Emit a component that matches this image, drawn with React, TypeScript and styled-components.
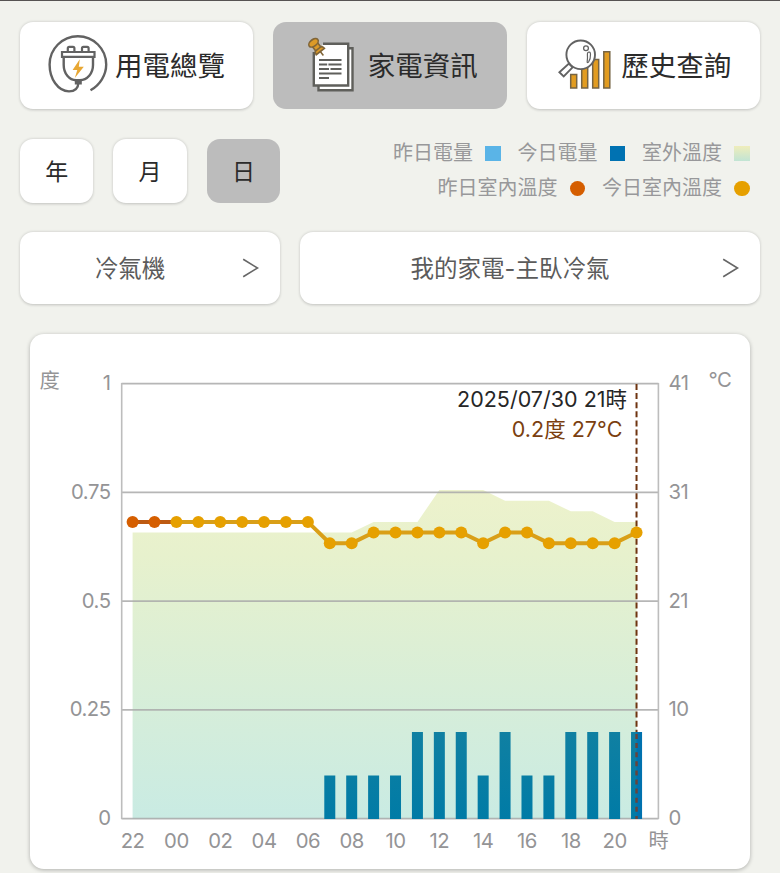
import React from "react";
import styled, { createGlobalStyle } from "styled-components";

const GlobalStyle = createGlobalStyle`
  * { box-sizing: border-box; }
  body {
    margin: 0;
    background: #f1f2ed;
    font-family: Inter, "Noto Sans CJK TC", sans-serif;
  }
  button { font-family: inherit; }
`;

const Page = styled.main`
  width: 780px;
  height: 873px;
  overflow: hidden;
  border-top: 1px solid #565352;
  padding: 20.5px 20px 0;
  display: flex;
  flex-direction: column;
`;

const Surface = styled.button<{ $active?: boolean }>`
  border: 0;
  padding: 0;
  border-radius: 13px;
  background: ${(p) => (p.$active ? "#bcbcbc" : "#fff")};
  box-shadow: ${(p) => (p.$active ? "none" : "0 0.5px 3px rgba(0, 0, 0, 0.2)")};
  color: #2b2b2b;
  display: flex;
  align-items: center;
  white-space: nowrap;
`;

const Tabs = styled.nav`
  display: grid;
  grid-template-columns: repeat(3, 1fr);
  gap: 20px;
  height: 87px;
`;

const Tab = styled(Surface)<{ $inset: number }>`
  padding-left: ${(p) => p.$inset}px;
  gap: 5px;
  font-size: 27.5px;
  line-height: 40px;

  svg { flex: none; }
  span { padding-top: 2px; }
`;

const FilterRow = styled.div`
  display: flex;
  justify-content: space-between;
  height: 63.5px;
  margin-top: 30.5px;
`;

const Periods = styled.div`
  display: flex;
  gap: 20px;
`;

const Period = styled(Surface)`
  width: 73.4px;
  justify-content: center;
  font-size: 23px;
  padding-bottom: 2px;
`;

const Legend = styled.div`
  display: flex;
  flex-direction: column;
  align-items: flex-end;
  gap: 6px;
  padding-right: 10.5px;
`;

const LegendLine = styled.div`
  display: flex;
  gap: 17px;
  height: 29.5px;
`;

const LegendItem = styled.div`
  display: flex;
  align-items: center;
  gap: 12px;
  color: #98989a;
  font-size: 20px;
  line-height: 29px;
`;

const Swatch = styled.i<{ $fill: string; $round?: boolean }>`
  width: 15.5px;
  height: 15.5px;
  background: ${(p) => p.$fill};
  border-radius: ${(p) => (p.$round ? "50%" : "0")};
`;

const Selectors = styled.div`
  display: grid;
  grid-template-columns: 260px 460px;
  gap: 20px;
  height: 72px;
  margin-top: 29.5px;
`;

const Selector = styled(Surface)`
  color: #5b5b5b;
  font-size: 23.5px;
  padding: 0 20px 0 0;

  span { flex: 1; text-align: center; padding-bottom: 2px; }
  svg { flex: none; }
`;

const ChartCard = styled.section`
  width: 720px;
  height: 534.5px;
  margin: 30px auto 0;
  flex: none;
  border-radius: 14px;
  background: #fff;
  box-shadow: 0 1px 4px rgba(0, 0, 0, 0.28);

  svg { display: block; }
`;

const AxisText = styled.text`
  fill: #949496;
  font-size: 20.3px;
  letter-spacing: -0.5px;
`;

const Callout = styled.text<{ $accent?: boolean }>`
  fill: ${(p) => (p.$accent ? "#7b3f10" : "#262626")};
  font-size: 21.5px;
`;

const PlugIcon = () => (
  <svg width="64" height="64" viewBox="46 34 64 64" fill="none" stroke="#626262" strokeWidth="2.4">
    <path d="M90.5 91.3C100 86 106.2 76 106.2 65.5A28.3 28.3 0 0 0 49.6 65.5C49.6 80 58 92 69 92.4C75 92.4 78.3 89 78.3 84" />
    <path d="M67.8 52.5v-3.2q0-1.4 1.4-1.4h3.8q1.4 0 1.4 1.4v3.2M82 52.5v-3.2q0-1.4 1.4-1.4h3.8q1.4 0 1.4 1.4v3.2" strokeWidth="2.2" />
    <path d="M62 53h32.5v4.8H62z" strokeWidth="2.2" />
    <path d="M63.7 58v8c0 8.5 5.5 15.2 12.5 15.2h3.6c7.5 0 13.2-6.8 13.2-15.2v-8" strokeWidth="2.4" />
    <path d="M74.8 81.5h7v4h-7z" fill="#626262" stroke="none" />
    <path d="M79.8 60.3L72.6 71h4.7l-2.5 8 9-11.3h-5z" fill="#e8a733" stroke="none" />
  </svg>
);

const NotesIcon = () => (
  <svg width="60" height="64" viewBox="303 34 60 64" fill="none" stroke="#5f5f5b" strokeWidth="2.4">
    <path d="M318.5 49.3h34v42h-34z" fill="#fff" />
    <path d="M323 44.7h25.2v41.8h-34.4V54h6z" fill="#fff" stroke="none" />
    <path d="M323 44.7h25.2v41.8h-34.4V53" />
    <path d="M319 61h22.5M319 65.5h8.2M328.4 65.5h13.1M319 70h10M330.5 70h11M319 74.5h22.5M319 79h10" strokeWidth="1.9" />
    <g transform="rotate(-38 316 47)" fill="#dc9a28" stroke="#806538" strokeWidth="1.6">
      <path d="M316 53v6" />
      <path d="M310.8 54q.3-4.4 5.2-4.4t5.2 4.4z" />
      <path d="M312.8 44h6.4v6.6h-6.4z" />
      <ellipse cx="316" cy="43" rx="5.4" ry="3.3" />
    </g>
  </svg>
);

const HistoryIcon = () => (
  <svg width="60" height="64" viewBox="556 34 60 64" fill="none" stroke="#626262" strokeWidth="1.9">
    <g fill="#e29c20" stroke="#766444" strokeWidth="1.5">
      <path d="M570.7 75.5h6v13.6h-6zM581.7 67.5h6v21.6h-6zM592.7 60.5h6v28.6h-6zM603.8 52.8h6v36.3h-6z" />
    </g>
    <path d="M568.9 64.6l3.7 3.7-8.9 9.2-4.3-4.3z" fill="#fff" />
    <circle cx="580.7" cy="55.8" r="14.3" fill="#fff" />
    <circle cx="586" cy="49.3" r="2.4" strokeWidth="1.3" />
    <path d="M588.2 53.3q2.2-1 2.3 2 .2 5-2 7.8-1.6 1.3-1.3-.8 .5-3 .2-6.5-.2-2 .8-2.5z" strokeWidth="1.2" />
  </svg>
);

const Chevron = () => (
  <svg width="20" height="24" viewBox="0 0 20 24" fill="none" stroke="#666" strokeWidth="1.6">
    <path d="M3.2 3.2L17.5 12L3.2 20.8" />
  </svg>
);

const repeat = (value: number, count: number): number[] => Array(count).fill(value);

const indoor = [...repeat(28, 9), 26, 26, ...repeat(27, 5), 26, 27, 27, ...repeat(26, 4), 27];
const outdoor = [...repeat(27, 11), 28, 28, 28, 31, 31, 31, 30, 30, 30, 29, 29, 28, 28];
const usage = [...repeat(0, 9), ...repeat(0.1, 4), 0.2, 0.2, 0.2, 0.1, 0.2, 0.1, 0.1, ...repeat(0.2, 4)];
const hours = ["22", "00", "02", "04", "06", "08", "10", "12", "14", "16", "18", "20", "時"];

const BASE = 485;
const SPAN = 435;
const xAt = (i: number) => 102.6 + i * 21.91;
const yTemp = (t: number) => BASE - (t / 41) * SPAN;

const levels = [
  { left: "1", right: "41" },
  { left: "0.75", right: "31" },
  { left: "0.5", right: "21" },
  { left: "0.25", right: "10" },
  { left: "0", right: "0" },
];

const toPoints = (temps: number[]) =>
  temps.map((t, i) => `${xAt(i)},${yTemp(t)}`).join(" ");

const UsageChart = () => (
  <svg width="720" height="534" viewBox="0 0 720 534">
    <defs>
      <linearGradient id="outdoorFill" x1="0" y1="0" x2="0" y2="1">
        <stop offset="0" stopColor="#edf2cc" />
        <stop offset="0.2" stopColor="#e7f1cd" />
        <stop offset="1" stopColor="#c9ebe3" />
      </linearGradient>
      <linearGradient id="usageFill" gradientUnits="userSpaceOnUse" x1="0" y1="398" x2="0" y2={BASE}>
        <stop offset="0" stopColor="#1080a2" />
        <stop offset="1" stopColor="#007ba6" />
      </linearGradient>
    </defs>

    <polygon
      points={`${xAt(0)},${BASE} ${toPoints(outdoor)} ${xAt(23)},${BASE}`}
      fill="url(#outdoorFill)"
    />
    {levels.map((level, i) => (
      <g key={level.left}>
        <line x1="91.5" x2="628.5" y1={49.6 + (i * SPAN) / 4} y2={49.6 + (i * SPAN) / 4} stroke="#a9a9a9" strokeOpacity="0.85" strokeWidth="1.6" />
        <AxisText x="80.5" y={56.2 + (i * SPAN) / 4} textAnchor="end">{level.left}</AxisText>
        <AxisText x="638.5" y={56.2 + (i * SPAN) / 4}>{level.right}</AxisText>
      </g>
    ))}
    <path d="M91.7 49V485M628.4 49V485" stroke="#bdbdbd" strokeWidth="1.6" />

    {usage.map((kwh, i) =>
      kwh > 0 ? (
        <rect key={i} x={xAt(i) - 5.5} y={BASE - kwh * SPAN} width="11" height={kwh * SPAN} fill="url(#usageFill)" />
      ) : null
    )}
    <rect x={xAt(23)} y={BASE - 0.2 * SPAN} width="5.5" height={0.2 * SPAN} fill="#0071ae" />

    <line x1={xAt(23)} x2={xAt(23)} y1="50" y2="398" stroke="#6f3410" strokeWidth="2" strokeDasharray="6 3.1" />
    <line x1={xAt(23)} x2={xAt(23)} y1="400" y2={BASE} stroke="#6a4238" strokeWidth="2.4" strokeDasharray="5 4.1" />

    <polyline points={toPoints(indoor)} fill="none" stroke="#d99f18" strokeWidth="4" />
    <line x1={xAt(0)} x2={xAt(2)} y1={yTemp(28)} y2={yTemp(28)} stroke="#bd5a12" strokeWidth="4" />
    {indoor.map((t, i) => (
      <circle key={i} cx={xAt(i)} cy={yTemp(t)} r="6" fill={i < 2 ? "#d55e00" : "#e6a000"} />
    ))}

    {hours.map((hour, i) => (
      <AxisText key={hour} x={xAt(i * 2)} y={hour === "時" ? 513.5 : 514} textAnchor="middle">{hour}</AxisText>
    ))}
    <AxisText x="9.5" y="53.5">度</AxisText>
    <AxisText x="678.5" y="53">°C</AxisText>
    <Callout x="597" y="72.5" textAnchor="end">2025/07/30 21時</Callout>
    <Callout x="592.5" y="102.5" textAnchor="end" $accent>0.2度 27°C</Callout>
  </svg>
);

export default function App() {
  return (
    <>
      <GlobalStyle />
      <Page>
        <Tabs>
          <Tab $inset={26}><PlugIcon /><span>用電總覽</span></Tab>
          <Tab $inset={29.5} $active><NotesIcon /><span>家電資訊</span></Tab>
          <Tab $inset={29.5}><HistoryIcon /><span>歷史查詢</span></Tab>
        </Tabs>
        <FilterRow>
          <Periods>
            <Period>年</Period>
            <Period>月</Period>
            <Period $active>日</Period>
          </Periods>
          <Legend>
            <LegendLine>
              <LegendItem>昨日電量<Swatch $fill="#5ab4e7" /></LegendItem>
              <LegendItem>今日電量<Swatch $fill="#0072b2" /></LegendItem>
              <LegendItem>室外溫度<Swatch $fill="linear-gradient(#efedbb, #c1e4d4)" /></LegendItem>
            </LegendLine>
            <LegendLine>
              <LegendItem>昨日室內溫度<Swatch $fill="#d55e00" $round /></LegendItem>
              <LegendItem>今日室內溫度<Swatch $fill="#e6a000" $round /></LegendItem>
            </LegendLine>
          </Legend>
        </FilterRow>
        <Selectors>
          <Selector><span>冷氣機</span><Chevron /></Selector>
          <Selector><span>我的家電-主臥冷氣</span><Chevron /></Selector>
        </Selectors>
        <ChartCard><UsageChart /></ChartCard>
      </Page>
    </>
  );
}
